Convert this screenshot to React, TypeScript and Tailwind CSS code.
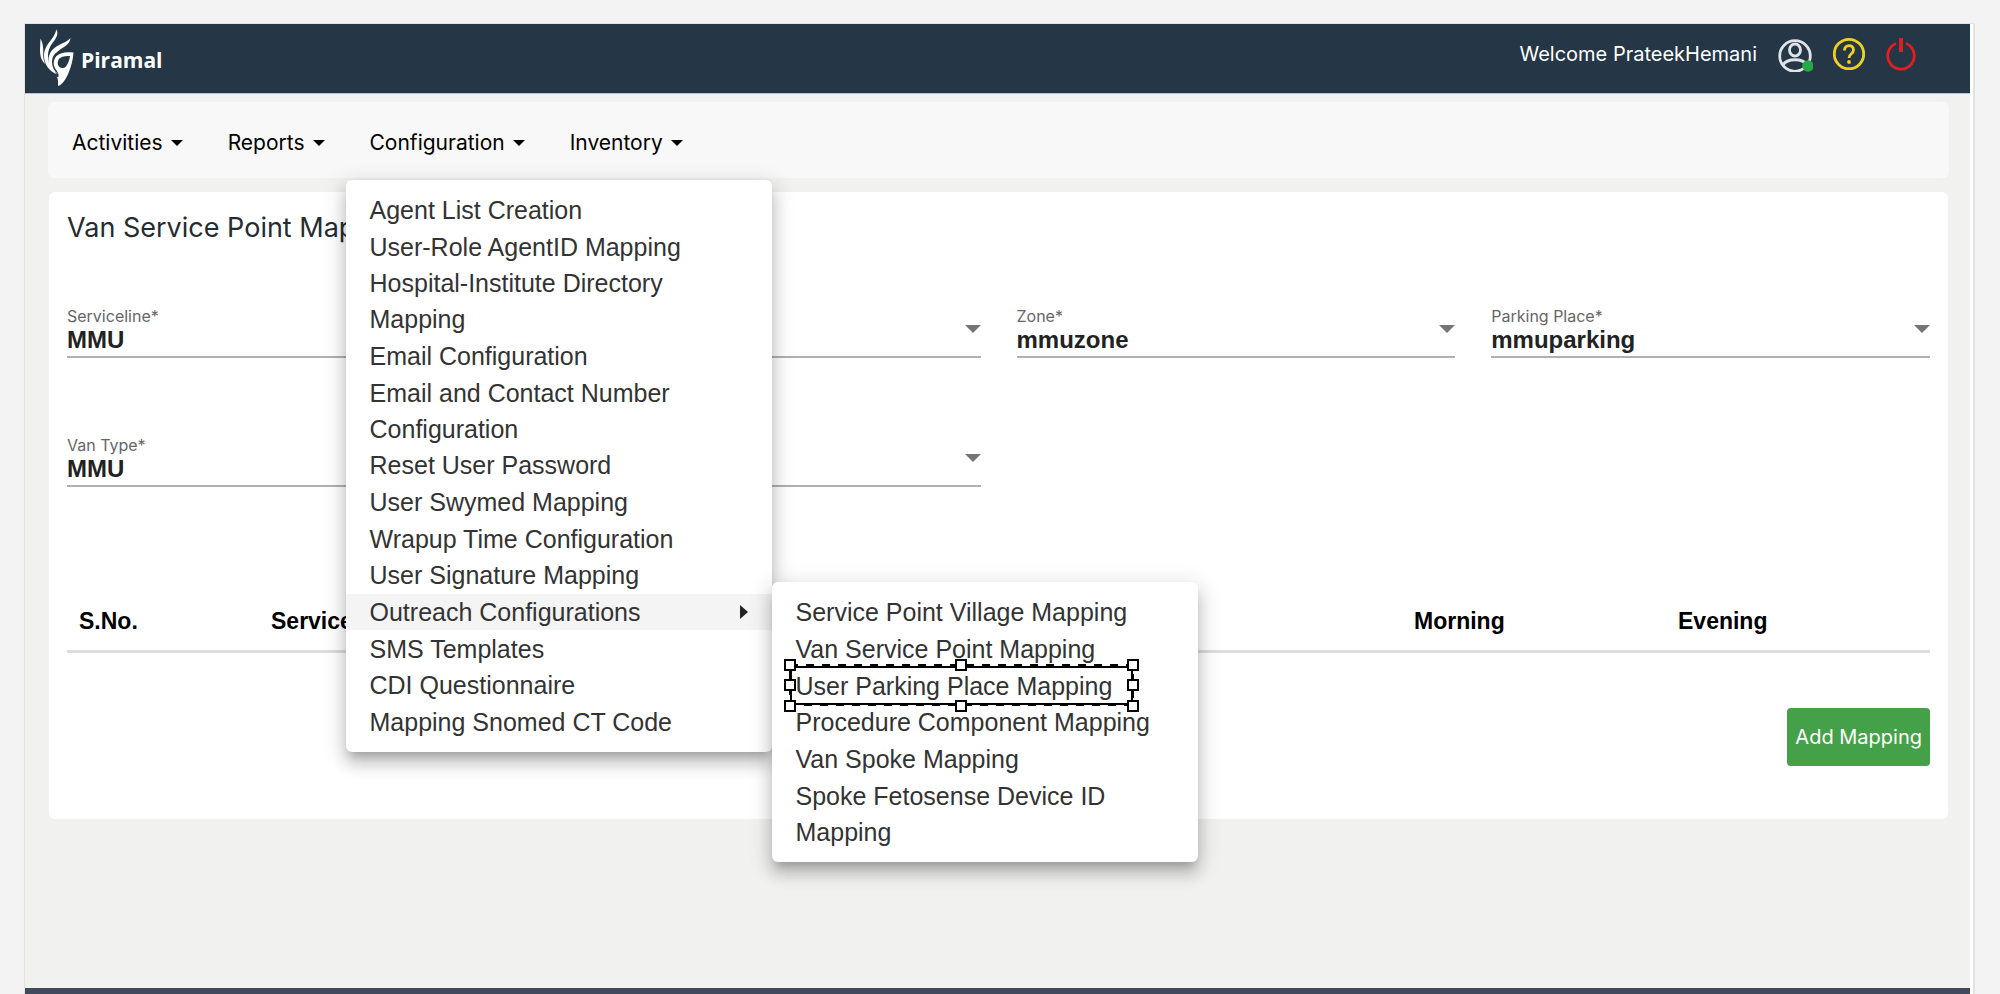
import React from "react";

const navItems = ["Activities", "Reports", "Configuration", "Inventory"];

const configItems = [
  "Agent List Creation",
  "User-Role AgentID Mapping",
  "Hospital-Institute Directory Mapping",
  "Email Configuration",
  "Email and Contact Number Configuration",
  "Reset User Password",
  "User Swymed Mapping",
  "Wrapup Time Configuration",
  "User Signature Mapping",
  "Outreach Configurations",
  "SMS Templates",
  "CDI Questionnaire",
  "Mapping Snomed CT Code",
];

const outreachItems = [
  "Service Point Village Mapping",
  "Van Service Point Mapping",
  "User Parking Place Mapping",
  "Procedure Component Mapping",
  "Van Spoke Mapping",
  "Spoke Fetosense Device ID Mapping",
];

const menuPanel =
  "absolute z-10 flex w-[426px] flex-col justify-between rounded-md bg-white py-3 font-['Liberation_Sans',sans-serif] text-[25px] leading-9 text-[#333] shadow-[0_8px_8px_-5px_rgba(0,0,0,0.2),0_12px_15px_1px_rgba(0,0,0,0.14),0_5px_21px_4px_rgba(0,0,0,0.12)]";

function Logo() {
  return (
    <a href="#home" className="flex items-center gap-1.5 text-white">
      <svg width="36" height="58" viewBox="0 0 36 58" fill="#fff" aria-hidden="true">
        <path d="M1.500 9.500C4 14 4.500 20 4.200 25C4 29 5 32 6 35C2 31 1 26 1 21Z" />
        <path d="M17.500 0.500C19.500 4 18 8 15 12C11 17 9 21 9 27C9 35 13 41 18 45.500C10 42 5 35 5 27C5 20 8 16 12 11C15 7 16.500 4 17.500 0.500Z" />
        <path d="M31.500 9C31 14 27 17 22 20C16 24 13 27 13 33C13 38 15 42 19 45C12.500 42 9.500 37 9.500 31C9.500 24 14 19 20 16C25 13.500 29 12 31.500 9Z" />
        <path
          fillRule="evenodd"
          d="M34.500 23.500C27 22.500 21 23.500 17.500 27C14 31 14 36 16.500 40C18.500 43 20 45 19.500 47C19 49 18.500 48 17.500 47.500C19.500 50 19 53 19 57C23 56 27 50 29.500 44C32 38 34 31 34.500 23.500ZM31 27C30.500 31 29 35 27 37.500C25 39.500 22 39.500 20 37.500C18 35 18.500 31 21 29C24 27 28 27 31 27Z"
        />
      </svg>
      <span className="pt-1 font-['Open_Sans','Noto_Sans',sans-serif] text-[21px] leading-8 font-bold">Piramal</span>
    </a>
  );
}

function Caret() {
  return <span className="border-x-[6px] border-t-[6px] border-x-transparent border-t-black" />;
}

function SelectionBox() {
  return (
    <svg
      className="pointer-events-none absolute -top-[9px] left-[11px] z-20"
      width="356"
      height="54"
      viewBox="0 0 356 54"
      fill="none"
      stroke="#000"
      aria-hidden="true"
    >
      <path d="M8 8H349V45H8Z" strokeWidth="2" />
      <path d="M7 6H350V46H7Z" strokeWidth="2" strokeDasharray="8 8" />
      <g fill="#fff" strokeWidth="2">
        {[6, 47].map((y) => [7, 178, 350].map((x) => <rect key={`${x}-${y}`} x={x - 5} y={y - 5} width="10" height="10" />))}
        <rect x="2" y="21" width="10" height="10" />
        <rect x="345" y="21" width="10" height="10" />
      </g>
    </svg>
  );
}

function OutreachMenu() {
  return (
    <ul className={`${menuPanel} -top-3 left-full min-h-[280px]`}>
      {outreachItems.map((item) => (
        <li key={item} className="relative">
          <a href="#outreach" className="block pr-8 pl-6">{item}</a>
          {item === "User Parking Place Mapping" && <SelectionBox />}
        </li>
      ))}
    </ul>
  );
}

function ConfigurationMenu() {
  return (
    <ul className={`${menuPanel} top-full -left-6 min-h-[572px]`}>
      {configItems.map((item) =>
        item === "Outreach Configurations" ? (
          <li key={item} className="relative bg-[#f4f4f4]">
            <a href="#configuration" className="flex items-center justify-between pr-6 pl-6">
              {item}
              <span className="border-y-[7px] border-l-8 border-y-transparent border-l-[#222]" />
            </a>
            <OutreachMenu />
          </li>
        ) : (
          <li key={item}>
            <a href="#configuration" className="block pr-8 pl-6">{item}</a>
          </li>
        )
      )}
    </ul>
  );
}

const selectStyle =
  "block h-[30px] w-full appearance-none bg-transparent pb-0.5 font-['Liberation_Sans',sans-serif] text-[24px] leading-[28px] font-bold text-[#222]";

function SelectField({ id, label, value }: { id: string; label?: string; value?: string }) {
  return (
    <div className="relative flex h-[52px] flex-col justify-end border-b-2 border-[#b0b0b0]">
      {label && <label htmlFor={id} className="block text-[16px] leading-5 text-[#666]">{label}*</label>}
      <select id={id} aria-label={label ? undefined : id} defaultValue={value} className={selectStyle}>
        {value && <option>{value}</option>}
      </select>
      <span className="pointer-events-none absolute top-[19px] right-0 border-x-8 border-t-8 border-x-transparent border-t-[#757575]" />
    </div>
  );
}

export default function App() {
  return (
    <div className="flex min-h-screen flex-col bg-[#f3f3f3] pt-[23px] pr-[25px] pl-6 font-['Inter',sans-serif]">
      <div className="flex flex-1 flex-col border-t border-r-2 border-l border-[#e3e3e3] bg-white pr-[3px]">
        <header className="flex h-[70px] items-start justify-between border-b border-[#b9c2d0] bg-[#253646] pr-[53px] pl-[14px]">
          <div className="pt-[5px]"><Logo /></div>
          <div className="flex items-center gap-5 pt-3 text-white">
            <span className="text-[20px] leading-9">Welcome PrateekHemani</span>
            <button type="button" aria-label="Profile" className="block">
              <svg width="36" height="36" viewBox="0 0 36 36" fill="none" stroke="#dfe3e8" strokeWidth="2.8" aria-hidden="true">
                <circle cx="18" cy="20" r="15.300" />
                <ellipse cx="18" cy="14" rx="5.500" ry="6" />
                <path d="M6 29C10 22 26 22 30 29" />
                <circle cx="31" cy="30" r="5.800" fill="#27a844" stroke="none" />
              </svg>
            </button>
            <button type="button" aria-label="Help" className="block">
              <svg width="32" height="36" viewBox="0 0 32 36" fill="none" stroke="#ecd11f" strokeWidth="2.800" aria-hidden="true">
                <circle cx="16" cy="18" r="14.700" />
                <path d="M11.500 14.500C11.500 8 20.500 8 20.500 14C20.500 18 16 17.500 16 22" />
                <circle cx="16" cy="26" r="1.900" fill="#ecd11f" stroke="none" />
              </svg>
            </button>
            <button type="button" aria-label="Log out" className="block">
              <svg width="32" height="36" viewBox="0 0 32 36" fill="none" stroke="#e02020" strokeWidth="2.800" aria-hidden="true">
                <path d="M11 7.500A13.300 13.300 0 1 0 21 7.500" />
                <path d="M16 2V16" strokeWidth="4" />
              </svg>
            </button>
          </div>
        </header>

        <div className="flex-1 bg-[#f1f1ef] pt-2 pr-[21px] pl-[23px]">
          <nav className="flex h-[76px] gap-[45px] rounded-md bg-[#f8f8f8] pl-6 text-black">
            {navItems.map((item) => (
              <div key={item} className="relative h-[78px] shrink-0">
                <button type="button" className="flex h-[82px] items-center gap-2 text-[21px]">
                  {item}
                  <Caret />
                </button>
                {item === "Configuration" && <ConfigurationMenu />}
              </div>
            ))}
          </nav>

          <main className="mx-px mt-[14px] rounded-md bg-white px-[18px] pt-4 pb-[53px]">
            <h1 className="text-[27px] leading-10 text-[#252b30]">Van Service Point Mapping</h1>
            <form className="mt-[58px] grid grid-cols-4 gap-x-9 gap-y-[77px]">
              <SelectField id="serviceline" label="Serviceline" value="MMU" />
              <SelectField id="state" />
              <SelectField id="zone" label="Zone" value="mmuzone" />
              <SelectField id="parking" label="Parking Place" value="mmuparking" />
              <SelectField id="vantype" label="Van Type" value="MMU" />
              <SelectField id="van" />
            </form>
            <table className="mt-[117px] w-full table-fixed border-b-[3px] border-[#ddd] text-left font-['Liberation_Sans',sans-serif] text-[23px] leading-[34px] text-black">
              <thead>
                <tr>
                  <th className="w-[192px] pb-3 pl-3">S.No.</th>
                  <th className="pb-3 pl-3">Service</th>
                  <th className="w-[264px] pb-3 pl-3">Morning</th>
                  <th className="w-[264px] pb-3 pl-3">Evening</th>
                </tr>
              </thead>
            </table>
            <div className="mt-[55px] flex justify-end">
              <button type="button" className="h-[58px] rounded bg-[#45a149] px-2 text-[20px] text-white">Add Mapping</button>
            </div>
          </main>
        </div>
        <footer className="h-[6px] bg-[#414a5c]" />
      </div>
    </div>
  );
}
